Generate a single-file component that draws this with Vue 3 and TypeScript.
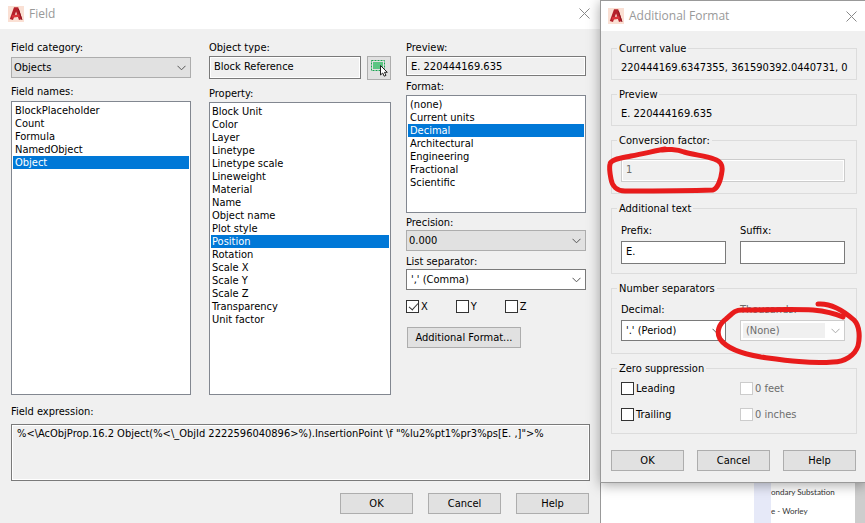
<script setup lang="ts">
import { ref } from 'vue'

const fieldNames: string[] = ['BlockPlaceholder', 'Count', 'Formula', 'NamedObject', 'Object']
const properties: string[] = [
  'Block Unit', 'Color', 'Layer', 'Linetype', 'Linetype scale', 'Lineweight', 'Material', 'Name',
  'Object name', 'Plot style', 'Position', 'Rotation', 'Scale X', 'Scale Y', 'Scale Z',
  'Transparency', 'Unit factor',
]
const formats: string[] = [
  '(none)', 'Current units', 'Decimal', 'Architectural', 'Engineering', 'Fractional', 'Scientific',
]

const fieldName = ref('Object')
const property = ref('Position')
const format = ref('Decimal')
const axes = ref([
  { name: 'X', on: true },
  { name: 'Y', on: false },
  { name: 'Z', on: false },
])
const zeros = ref([
  { name: 'Leading', on: false, disabled: false },
  { name: '0 feet', on: false, disabled: true },
  { name: 'Trailing', on: false, disabled: false },
  { name: '0 inches', on: false, disabled: true },
])
const prefix = ref('E.')
const suffix = ref('')
const expression = '%<\\AcObjProp.16.2 Object(%<\\_ObjId 2222596040896>%).InsertionPoint \\f "%lu2%pt1%pr3%ps[E. ,]">%'
</script>

<template>
  <div class="desktop">
    <main class="dialog field">
      <header class="titlebar">
        <svg class="logo" viewBox="0 0 16 16" aria-hidden="true">
          <rect width="16" height="16" fill="#fae0d4" />
          <path d="M3.4 13.5 L7.2 3 H9 L12.6 13.5" fill="none" stroke="#b5202a" stroke-width="3.4" />
          <path d="M4 10.5 L11.5 9.5" stroke="#d8343a" stroke-width="2.4" />
          <path d="M10.4 3 L14 14" stroke="#8e1620" stroke-width="1" />
        </svg>
        <h1>Field</h1>
        <button class="close" aria-label="Close">
          <svg viewBox="0 0 11 11"><path d="M.5 .5 L10.5 10.5 M10.5 .5 L.5 10.5" /></svg>
        </button>
      </header>

      <div class="content">
        <div class="columns">
          <section class="column first">
            <label for="category" class="caption">Field category:</label>
            <div class="combo grey space-top">
              <select id="category"><option>Objects</option></select>
              <svg viewBox="0 0 9 6"><path d="M.5 .8 L4.5 4.8 L8.5 .8" /></svg>
            </div>
            <label for="names" class="caption spaced">Field names:</label>
            <select id="names" v-model="fieldName" class="list grow space-top" size="5">
              <option v-for="n in fieldNames" :key="n">{{ n }}</option>
            </select>
          </section>

          <section class="column">
            <label for="objtype" class="caption">Object type:</label>
            <div class="picker">
              <input id="objtype" class="box readonly" value="Block Reference" readonly />
              <button class="pick" aria-label="Select object">
                <svg viewBox="0 0 22 22">
                  <rect x="3.5" y="3.5" width="13" height="10" fill="none" stroke="#16a34f" stroke-dasharray="2 1" />
                  <rect x="5" y="5" width="10" height="7" fill="#5cc583" />
                  <path d="M12.5 8.5 V18 L14.7 16 L16.2 19.2 L18 18.4 L16.5 15.3 H19.3 Z" fill="#fff" stroke="#222" />
                </svg>
              </button>
            </div>
            <label for="property" class="caption spaced">Property:</label>
            <select id="property" v-model="property" class="list tight grow space-small" size="17">
              <option v-for="p in properties" :key="p">{{ p }}</option>
            </select>
          </section>

          <section class="column">
            <label for="preview" class="caption">Preview:</label>
            <input id="preview" class="box readonly short" value="E. 220444169.635" readonly />
            <label for="format" class="caption near">Format:</label>
            <select id="format" v-model="format" class="list formats space-small" size="7">
              <option v-for="f in formats" :key="f">{{ f }}</option>
            </select>
            <label for="precision" class="caption near-small">Precision:</label>
            <div class="combo grey">
              <select id="precision"><option>0.000</option></select>
              <svg viewBox="0 0 9 6"><path d="M.5 .8 L4.5 4.8 L8.5 .8" /></svg>
            </div>
            <label for="separator" class="caption near">List separator:</label>
            <div class="combo">
              <select id="separator" class="indent"><option>',' (Comma)</option></select>
              <svg viewBox="0 0 9 6"><path d="M.5 .8 L4.5 4.8 L8.5 .8" /></svg>
            </div>
            <div class="axes">
              <label v-for="a in axes" :key="a.name" class="check">
                <input v-model="a.on" type="checkbox" />{{ a.name }}
              </label>
            </div>
            <button class="push wide">Additional Format...</button>
          </section>
        </div>

        <label for="expression" class="caption expression-label">Field expression:</label>
        <textarea id="expression" class="box readonly expression" readonly :value="expression"></textarea>
        <footer class="actions">
          <button class="push">OK</button>
          <button class="push">Cancel</button>
          <button class="push">Help</button>
        </footer>
      </div>
    </main>

    <aside class="side">
      <section class="dialog additional">
        <header class="titlebar">
          <svg class="logo" viewBox="0 0 16 16" aria-hidden="true">
            <rect width="16" height="16" fill="#fae0d4" />
            <path d="M3.4 13.5 L7.2 3 H9 L12.6 13.5" fill="none" stroke="#b5202a" stroke-width="3.4" />
            <path d="M4 10.5 L11.5 9.5" stroke="#d8343a" stroke-width="2.4" />
            <path d="M10.4 3 L14 14" stroke="#8e1620" stroke-width="1" />
          </svg>
          <h2>Additional Format</h2>
          <button class="close" aria-label="Close">
            <svg viewBox="0 0 11 11"><path d="M.5 .5 L10.5 10.5 M10.5 .5 L.5 10.5" /></svg>
          </button>
        </header>

        <div class="groups">
          <fieldset class="value">
            <legend>Current value</legend>
            <output>220444169.6347355, 361590392.0440731, 0</output>
          </fieldset>
          <fieldset class="value">
            <legend>Preview</legend>
            <output>E. 220444169.635</output>
          </fieldset>
          <fieldset class="factor">
            <legend id="factor">Conversion factor:</legend>
            <input class="box" value="1" disabled aria-labelledby="factor" />
          </fieldset>
          <fieldset class="texts">
            <legend>Additional text</legend>
            <div class="pair">
              <label for="prefix" class="caption">Prefix:</label>
              <label for="suffix" class="caption">Suffix:</label>
              <input id="prefix" v-model="prefix" class="box" />
              <input id="suffix" v-model="suffix" class="box" />
            </div>
          </fieldset>
          <fieldset class="separators">
            <legend>Number separators</legend>
            <div class="pair">
              <label for="decimal">Decimal:</label>
              <label for="thousands" class="dim">Thousands:</label>
              <div class="combo">
                <select id="decimal" class="indent"><option>'.' (Period)</option></select>
                <svg viewBox="0 0 9 6"><path d="M.5 .8 L4.5 4.8 L8.5 .8" /></svg>
              </div>
              <div class="combo off">
                <select id="thousands" class="indent" disabled><option>(None)</option></select>
                <svg viewBox="0 0 9 6"><path d="M.5 .8 L4.5 4.8 L8.5 .8" /></svg>
              </div>
            </div>
          </fieldset>
          <fieldset class="zeros">
            <legend>Zero suppression</legend>
            <div class="pair">
              <label v-for="z in zeros" :key="z.name" class="check" :class="{ dim: z.disabled }">
                <input v-model="z.on" type="checkbox" :disabled="z.disabled" />{{ z.name }}
              </label>
            </div>
          </fieldset>
          <footer class="actions">
            <button class="push">OK</button>
            <button class="push">Cancel</button>
            <button class="push">Help</button>
          </footer>
        </div>

        <!-- red marker strokes drawn over the dialog -->
        <svg class="marker" viewBox="0 0 265 483" aria-hidden="true">
          <path d="M62 150 C66 149 77 149 84 152 C95 155 106 156 114 159 C120 161 123 164 122 171 C121 179 118 188 113 190 C84 191 48 191 25 191 C17 191 12 186 11 179 C10 174 9 168 10 164 C11 159 22 158 31 156 C43 154 54 151 65 149" />
          <path d="M218 304 C231 303 245 312 254 320 C260 326 260 338 258 346 C255 355 245 362 233 362 C209 364 183 360 161 357 C143 354 127 349 120 339 C116 332 119 324 126 319 C132 314 134 310 142 310 C164 310 193 309 213 310 C224 311 234 313 243 317" />
        </svg>
      </section>

      <div class="backdrop">
        <div class="rail"></div>
        <div class="rows">
          <span>ondary Substation</span>
          <span>e - Worley</span>
        </div>
        <div class="scroll"></div>
      </div>
    </aside>
  </div>
</template>

<style>
body {
  margin: 0;
  background: #fff;
}
</style>

<style scoped>
* {
  box-sizing: border-box;
}

.desktop {
  display: grid;
  grid-template-columns: minmax(0, 1fr) 265px;
  min-height: 100vh;
  overflow: hidden;
  color: #000;
  font-family: 'DejaVu Sans Condensed', 'DejaVu Sans', sans-serif;
  font-size: 11px;
  line-height: 16px;
}

input, select, textarea, button {
  margin: 0;
  color: inherit;
  font: inherit;
  outline: none;
}

.dialog {
  display: flex;
  flex-direction: column;
  background: #f0f0f0;
}

.titlebar {
  display: flex;
  align-items: center;
  height: 29px;
  padding: 0 10px 2px 8px;
  background: #fff;
}

.logo {
  width: 16px;
  height: 16px;
  margin-right: 5px;
}

h1, h2 {
  flex: 1;
  margin: 0;
  color: #999;
  font: 12px/16px 'Open Sans', 'Noto Sans', sans-serif;
}

.close {
  display: flex;
  padding: 0;
  border: 0;
  background: none;
}

.close svg {
  width: 11px;
  height: 11px;
  fill: none;
  stroke: #888;
}

.content {
  display: flex;
  flex: 1;
  flex-direction: column;
  padding: 10px 10px 9px 11px;
}

.columns {
  display: grid;
  flex: 1;
  grid-template-columns: 183fr 182fr 180fr;
  gap: 15px;
  padding-right: 4px;
}

.column {
  display: flex;
  flex-direction: column;
  min-width: 0;
}

.first {
  padding-right: 3px;
}

.caption {
  height: 16px;
  padding-top: 1px;
}

.spaced {
  margin-top: 5px;
}

.near {
  margin-top: 2px;
}

.near-small {
  margin-top: 1px;
}

.space-top {
  margin-top: 2px;
}

.space-small {
  margin-top: 1px;
}

.combo {
  display: flex;
  align-items: center;
  height: 21px;
  padding-right: 4px;
  border: 1px solid #7a7a7a;
  background: #fff;
}

.combo.grey {
  border-color: #adadad;
  background: #e1e1e1;
}

.combo select {
  flex: 1;
  min-width: 0;
  height: 19px;
  padding: 0 2px;
  border: 0;
  background: none;
  appearance: none;
}

.combo select.indent {
  padding: 0 4px;
}

.combo svg {
  flex: none;
  width: 9px;
  height: 6px;
  fill: none;
  stroke: #555;
}

.combo.off {
  border-color: #ccc;
}

.combo.off select {
  height: 15px;
  margin: 0 6px 0 2px;
  padding: 0 3px;
  background: #f0f0f0;
  color: #6d6d6d;
  opacity: 1;
}

.combo.off svg {
  stroke: #aaa;
}

.list {
  padding: 2px 1px;
  overflow: hidden;
  border: 1px solid #828790;
  border-radius: 0;
  background: #fff;
}

.list.grow {
  flex: 1;
}

.list.formats {
  height: 118px;
}

.list option {
  min-height: 13px;
  padding: 0 2px;
  line-height: 13px;
}

.list.tight option {
  padding: 0 1px;
}

.list option:checked {
  background: linear-gradient(#0078d7, #0078d7);
  -webkit-text-fill-color: #fff;
}

.box {
  width: 100%;
  min-width: 0;
  height: 23px;
  padding: 0 4px 2px;
  border: 1px solid #7a7a7a;
  border-radius: 0;
  background: #fff;
}

.box.readonly {
  background: #f0f0f0;
  box-shadow: inset 0 0 0 1px #fff;
}

.box.short {
  height: 20px;
  margin-top: 1px;
  padding-bottom: 0;
}

.box:disabled {
  border-color: #ccc;
  background: #f0f0f0;
  box-shadow: inset 0 0 0 1px #fff;
  color: #6d6d6d;
}

.picker {
  display: flex;
  gap: 6px;
  height: 24px;
  margin-top: 1px;
}

.pick {
  flex: none;
  width: 24px;
  height: 24px;
  padding: 0;
  border: 1px solid #adadad;
  background: #e1e1e1;
}

.pick svg {
  display: block;
  width: 22px;
  height: 22px;
}

.check {
  display: flex;
  align-items: center;
  gap: 2px;
  height: 13px;
}

.check input {
  width: 13px;
  height: 13px;
  border: 1px solid #333;
  background: #fff;
  appearance: none;
}

.check input:checked::after {
  display: block;
  width: 4px;
  height: 8px;
  margin: 0 0 0 4px;
  border: solid #333;
  border-width: 0 1px 1px 0;
  content: '';
  transform: rotate(42deg);
}

.check input:disabled {
  border-color: #ccc;
}

.dim {
  color: #6d6d6d;
}

.axes {
  display: flex;
  gap: 28px;
  margin: 10px 0 14px;
}

.push {
  width: 73px;
  height: 21px;
  padding: 0;
  border: 1px solid #adadad;
  border-radius: 0;
  background: #e1e1e1;
}

.push.wide {
  width: 114px;
  margin-left: 1px;
}

.expression-label {
  margin: 8px 0 5px;
}

.expression {
  display: block;
  height: 57px;
  padding: 1px 5px;
  overflow: hidden;
  resize: none;
}

.actions {
  display: flex;
  gap: 15px;
  justify-content: flex-end;
  margin-top: 12px;
  padding-right: 1px;
}

.side {
  z-index: 1;
  display: flex;
  flex-direction: column;
}

.additional {
  position: relative;
  z-index: 1;
  border-top: 1px solid #999;
  border-bottom: 1px solid #999;
  border-left: 1px solid #999;
  box-shadow: 0 2px 12px rgba(0, 0, 0, 0.35);
}

.additional .titlebar {
  height: 30px;
  padding: 0 8px 0 7px;
}

.groups {
  padding: 10px 8px 11px 10px;
}

fieldset {
  min-width: 0;
  margin: 0 0 7px;
  padding: 7px 11px 12px 9px;
  border: 1px solid #dcdcdc;
}

legend {
  height: 14px;
  margin-left: -4px;
  padding: 1px 2px 0;
  line-height: 14px;
}

fieldset.value {
  padding: 4px 11px 4px 9px;
}

output {
  display: block;
  height: 16px;
  padding-top: 1px;
  white-space: nowrap;
}

fieldset.factor {
  padding-top: 12px;
  padding-bottom: 11px;
}

.factor .box {
  display: block;
}

fieldset.texts {
  padding-bottom: 9px;
}

.pair {
  display: grid;
  grid-template-columns: 1fr 1fr;
  gap: 2px 14px;
}

.texts .pair {
  row-gap: 3px;
}

.zeros .pair {
  row-gap: 13px;
}

.groups .actions {
  gap: 13px;
  margin-top: 16px;
}

.marker {
  position: absolute;
  top: -1px;
  left: -1px;
  width: 265px;
  height: 483px;
  overflow: visible;
  fill: none;
  stroke: #e81c1c;
  stroke-width: 5px;
  stroke-linecap: round;
  stroke-linejoin: round;
  pointer-events: none;
}

.backdrop {
  display: flex;
  flex: 1;
  justify-content: flex-end;
  border-left: 1px solid #999;
  background: #fff;
  color: #333;
  font: 8px/19px Lato, 'Noto Sans', sans-serif;
}

.rail {
  width: 17px;
  background: #e6e9f8;
}

.rows {
  display: flex;
  flex-direction: column;
  width: 84px;
  overflow: hidden;
  white-space: nowrap;
}

.scroll {
  width: 10px;
  background: #cdcdcd;
}
</style>
